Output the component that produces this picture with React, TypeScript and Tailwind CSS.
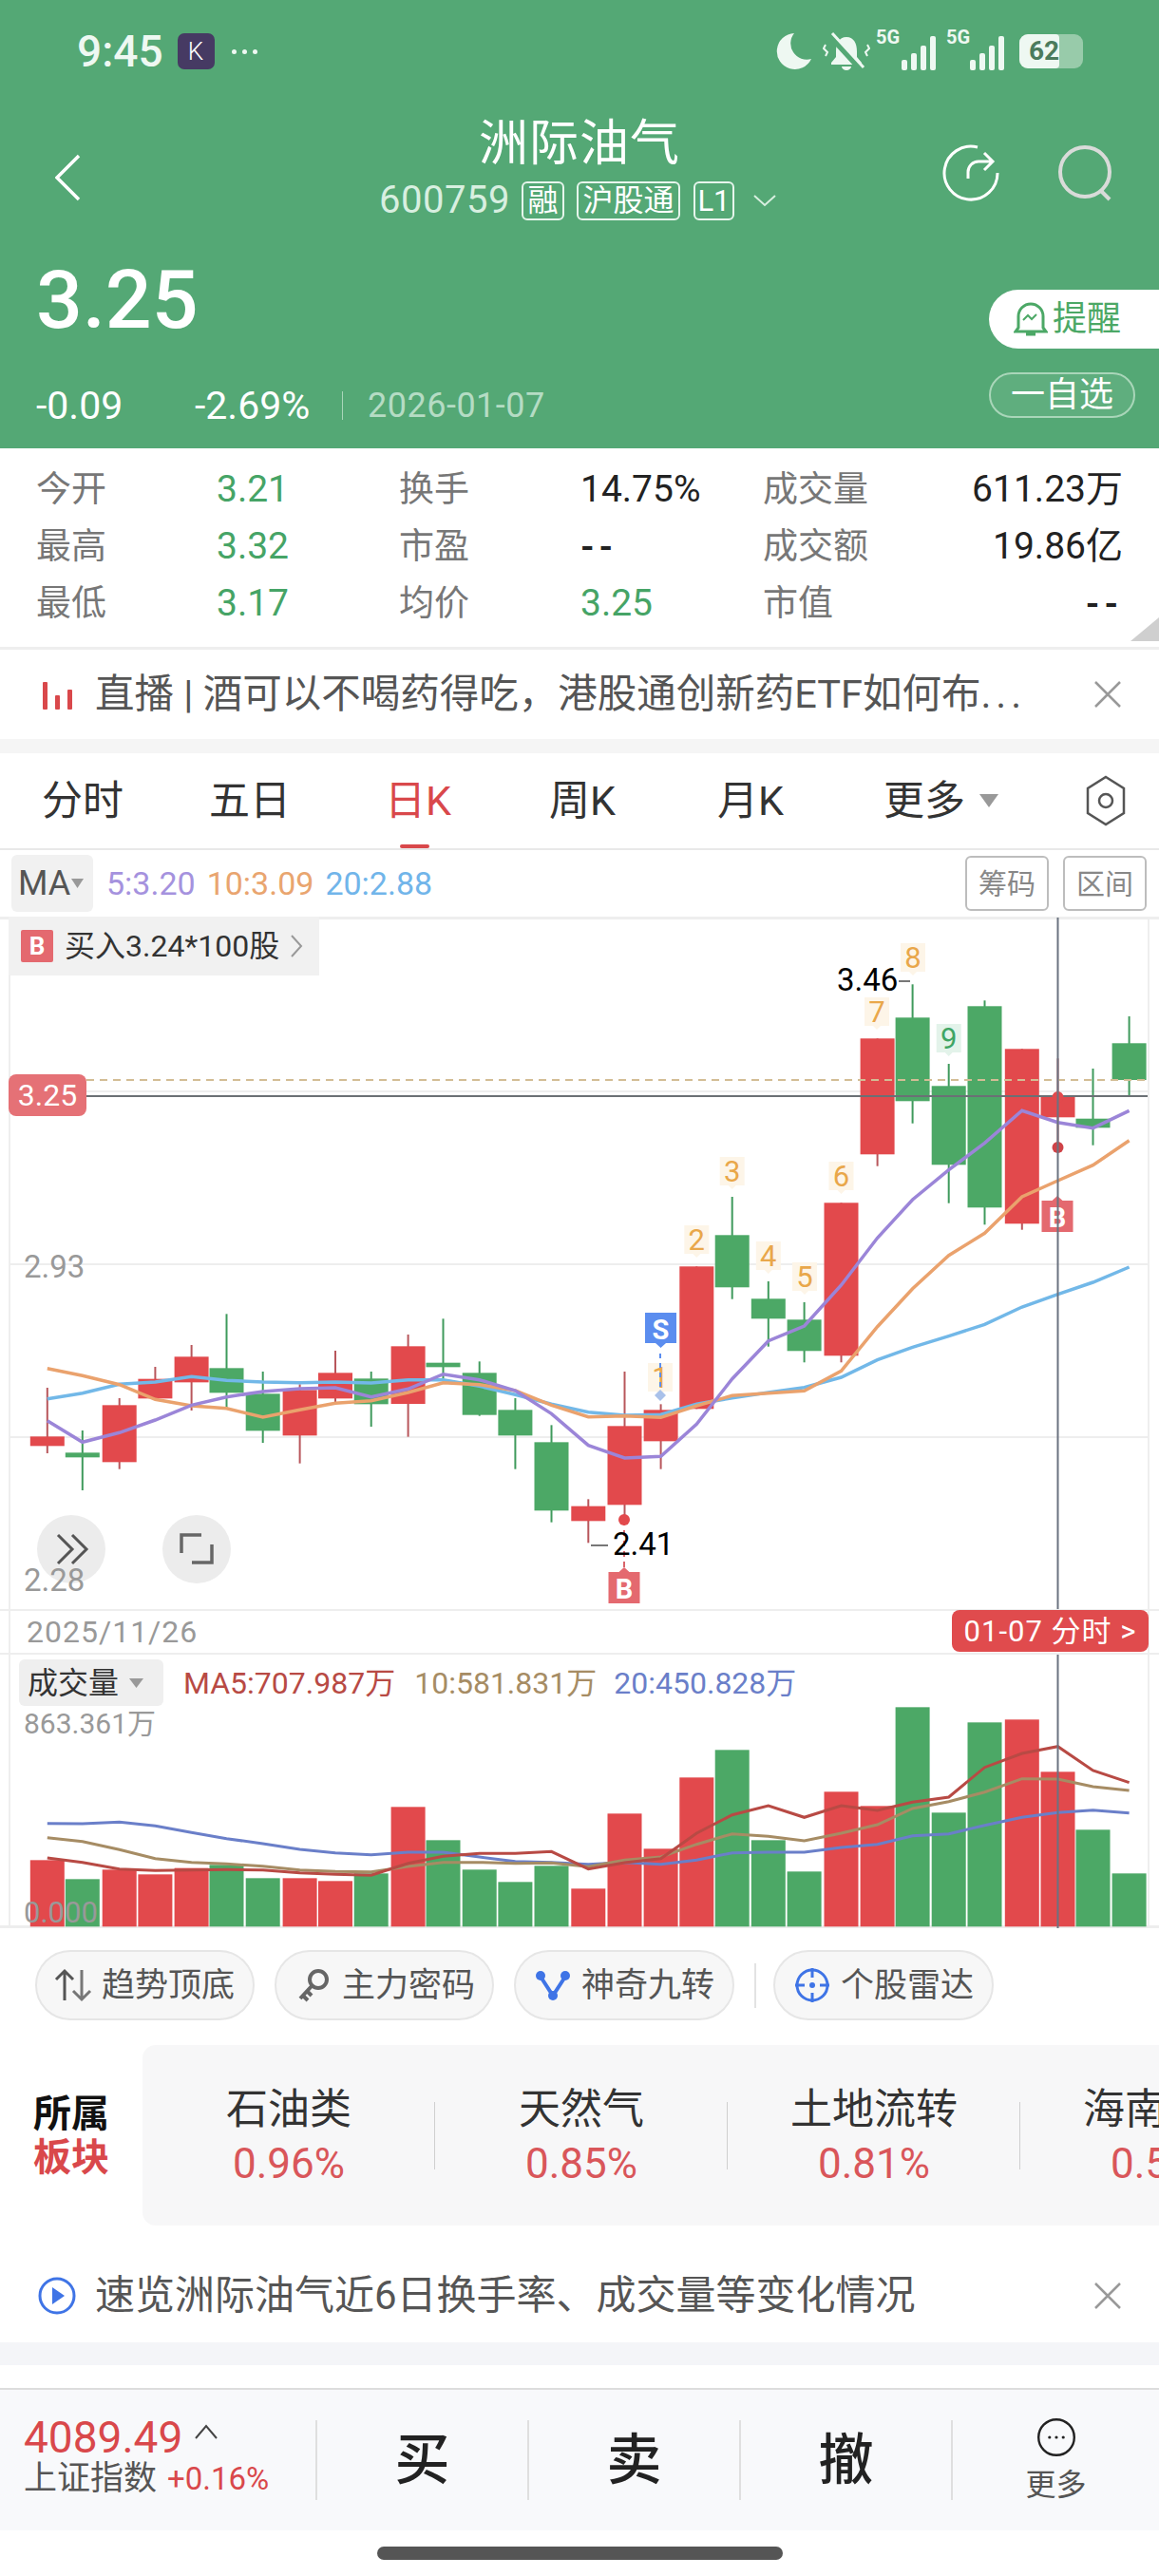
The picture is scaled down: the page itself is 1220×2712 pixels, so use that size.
import React from "react";

const RED = "#e2494c";
const GREEN = "#4ca866";
const xs = [49.8, 86.8, 125.7, 163.4, 201.6, 238.5, 276.7, 315.6, 353, 390.7, 429.6, 466.5, 504.7, 542.4, 580.5, 619.3, 657.5, 695.6, 733.3, 770.7, 808.8, 846.6, 885.5, 923.6, 960.6, 998.7, 1036.5, 1075.8, 1113.5, 1150.5, 1188.6];
const z = (v: number) => 1340 + v / 3;

type C = [number, number, number, number, "r" | "g"];
const candles: C[] = [
  [z(363), z(570), z(517), z(547), "r"],
  [z(498), z(687), z(568), z(583), "g"],
  [z(396), z(620), z(418), z(598), "r"],
  [z(297), z(400), z(335), z(397), "r"],
  [z(228), z(435), z(265), z(346), "r"],
  [z(130), z(430), z(301), z(379), "g"],
  [z(312), z(537), z(382), z(499), "g"],
  [z(352), z(602), z(370), z(514), "r"],
  [z(246), z(415), z(316), z(397), "r"],
  [z(312), z(486), z(334), z(415), "g"],
  [z(195), z(518), z(232), z(414), "r"],
  [z(145), z(335), z(284), z(298), "g"],
  [z(280), z(452), z(316), z(449), "g"],
  [z(396), z(620), z(433), z(514), "g"],
  [z(481), z(788), z(535), z(751), "g"],
  [z(715), z(853), z(737), z(784), "r"],
  [z(312), z(770), z(484), z(733), "r"],
  [z(415), z(620), z(433), z(532), "r"],
  [1333.3, 1483.3, 1333.3, 1483.3, "r"],
  [1260, 1367.7, 1300.3, 1355.3, "g"],
  [1349, 1417.7, 1367.3, 1388.3, "g"],
  [1371, 1434.3, 1389.3, 1422.3, "g"],
  [1266.3, 1434.3, 1266.3, 1427.3, "r"],
  [1093.3, 1227.7, 1093.3, 1215.3, "r"],
  [1036.3, 1182.7, 1071.3, 1159.3, "g"],
  [1120, 1266.7, 1143.3, 1226.3, "g"],
  [1053.3, 1289.3, 1059.3, 1271.3, "g"],
  [1104.3, 1294.7, 1104.3, 1288.3, "r"],
  [1114.3, 1203, 1154.3, 1176.3, "r"],
  [1125, 1205.7, 1177.7, 1187.3, "g"],
  [1070, 1153.3, 1098.3, 1137, "g"],
];

const ma5 = [467, 535, 505, 465, 418, 392, 375, 366, 363, 392, 367, 320, 338, 372, 445, 545, 585, 580, 478, 335, 215, 168].map(z).concat([1353, 1303.3, 1263, 1231.7, 1203.3, 1169.3, 1181.7, 1187.7, 1169.3]);
const ma10 = [302, 325, 353, 400, 420, 428, 456, 433, 412, 404, 378, 347, 353, 372, 418, 455, 452, 457, 420, 388, 380, 373, 310, 170].map(z).concat([1356.7, 1321.7, 1298.3, 1260, 1243, 1226.7, 1200.7]);
const ma20 = [398, 380, 352, 345, 328, 340, 345, 347, 345, 348, 338, 338, 358, 385, 415, 440, 450, 448, 415, 395, 378, 362, 330, 275, 235, 200, 163, 108, 68, 30, -18].map(z);

const volTops = [655, 715, 685, 700, 680, 670, 712, 712, 721, 697, 487, 592, 685, 724, 673, 745, 508, 619, 394, 307, 592, 691, 439, 484, 172, 505, 220, 211, 376, 559, 697];
const v5 = [648, 662, 683, 688, 686, 685, 686, 695, 700, 703, 665, 643, 634, 634, 628, 683, 663, 650, 570, 512, 483, 520, 483, 498, 472, 456, 362, 318, 296, 372, 410];
const v10 = [584, 596, 622, 650, 662, 667, 674, 686, 691, 692, 675, 662, 662, 665, 664, 676, 655, 645, 605, 572, 580, 594, 570, 543, 492, 470, 440, 398, 399, 423, 435];
const v20 = [539, 540, 535, 547, 568, 587, 603, 621, 632, 638, 630, 630, 645, 659, 662, 668, 662, 668, 655, 632, 630, 630, 615, 605, 578, 572, 545, 520, 505, 497, 506];

const pts = (ys: number[]) => ys.map((y, i) => `${xs[i]},${y.toFixed(1)}`).join(" ");
const volPts = (ys: number[]) => pts(ys.map((v) => 1740 + v / 3));

function Tag({ x, y, n, green }: { x: number; y: number; n: string; green?: boolean }) {
  return (
    <g>
      <path d={`M${x - 13} ${y}h26v30h-9l-4 4l-4 -4h-9z`} fill={green ? "#e3f3ea" : "#fdf5e8"} />
      <text x={x} y={y + 26} textAnchor="middle" fontSize="31" fill={green ? "#3fa564" : "#e9a74a"}>{n}</text>
    </g>
  );
}

function BMark({ x, y }: { x: number; y: number }) {
  return (
    <g>
      <path d={`M${x - 16.5} ${y}h11l5.5 -5l5.5 5h11v33h-33z`} fill="#e4696f" />
      <text x={x} y={y + 28} textAnchor="middle" fontSize="29" fontWeight="700" fill="#fff">B</text>
    </g>
  );
}

function MainChart() {
  return (
    <svg viewBox="0 965 1220 729" className="absolute left-0 top-[-3px] w-[1220px] h-[729px] font-['Roboto','Noto_Sans_CJK_SC',sans-serif]">
      <line x1="10" x2="1208" y1="1149" y2="1149" stroke="#eeeeee" strokeWidth="2" />
      <line x1="10" x2="1208" y1="1331" y2="1331" stroke="#eeeeee" strokeWidth="2" />
      <line x1="10" x2="1208" y1="1513" y2="1513" stroke="#eeeeee" strokeWidth="2" />
      {candles.map((c, i) => (
        <g key={i}>
          <line x1={xs[i]} x2={xs[i]} y1={c[0]} y2={c[1]} stroke={c[4] === "r" ? "#b8565b" : "#3f9a5c"} strokeWidth="2" />
          <rect x={xs[i] - 18} y={c[2]} width="36" height={c[3] - c[2]} fill={c[4] === "r" ? RED : GREEN} />
        </g>
      ))}
      <line x1="91" x2="1208" y1="1137" y2="1137" stroke="#d3bd95" strokeWidth="2" strokeDasharray="8 6" />
      <line x1="91" x2="1208" y1="1154" y2="1154" stroke="#6b7075" strokeWidth="2" />
      <polyline points={pts(ma20)} fill="none" stroke="#72b8e8" strokeWidth="3.500" />
      <polyline points={pts(ma10)} fill="none" stroke="#eaa26d" strokeWidth="3.500" />
      <polyline points={pts(ma5)} fill="none" stroke="#9b85d8" strokeWidth="3.500" />
      <Tag x={695} y={1435} n="1" />
      <Tag x={733.3} y={1290} n="2" />
      <Tag x={770.7} y={1218} n="3" />
      <Tag x={808.8} y={1307} n="4" />
      <Tag x={847} y={1329} n="5" />
      <Tag x={885.5} y={1223} n="6" />
      <Tag x={923} y={1050} n="7" />
      <Tag x={961} y={993} n="8" />
      <Tag x={998.7} y={1078} n="9" green />
      <line x1="695" x2="695" y1="1425" y2="1470" stroke="#5b8def" strokeWidth="2" strokeDasharray="5 5" />
      <path d="M679 1382h33v32h-11l-5.500 5l-5.500 -5h-11z" fill="#5b8def" />
      <text x="695.500" y="1410" textAnchor="middle" fontSize="29" fontWeight="700" fill="#fff">S</text>
      <path d="M695 1463l6 6l-6 6l-6 -6z" fill="#a9c1ea" />
      <line x1="657" x2="657" y1="1600" y2="1654" stroke="#d9646a" strokeWidth="2" strokeDasharray="6 5" />
      <circle cx="657" cy="1600" r="6" fill={RED} />
      <BMark x={657} y={1655} />
      <line x1="622" x2="640" y1="1627" y2="1627" stroke="#777" strokeWidth="2" />
      <text x="645" y="1637" fontSize="33" fill="#000">2.41</text>
      <text x="881" y="1043" fontSize="33" fill="#000">3.46</text>
      <line x1="946" x2="958" y1="1033" y2="1033" stroke="#777" strokeWidth="2" />
      <circle cx="1113.500" cy="1155" r="6" fill={RED} />
      <circle cx="1113.500" cy="1208" r="6" fill="#cf4348" />
      <BMark x={1113} y={1264} />
      <line x1="1113.500" x2="1113.500" y1="966" y2="1694" stroke="#6b7280" strokeWidth="2" />
      <text x="25" y="1345" fontSize="33" fill="#999">2.93</text>
      <circle cx="75" cy="1631" r="36" fill="#ececec" />
      <path d="M61 1616l15 15l-15 15M76 1616l15 15l-15 15" fill="none" stroke="#555" strokeWidth="3" />
      <circle cx="207" cy="1631" r="36" fill="#ececec" />
      <path d="M212 1616h-21v19M202 1645h21v-19" fill="none" stroke="#666" strokeWidth="3.500" />
      <text x="25" y="1675" fontSize="33" fill="#999">2.28</text>
    </svg>
  );
}

function VolChart() {
  const b = 2028.3;
  return (
    <svg viewBox="0 1742 1220 288" className="absolute inset-0 w-[1220px] h-[288px] font-['Roboto','Noto_Sans_CJK_SC',sans-serif]">
      {volTops.map((t, i) => {
        const y = 1740 + t / 3;
        return <rect key={i} x={xs[i] - 18} y={y} width="36" height={b - y} fill={candles[i][4] === "r" ? RED : GREEN} />;
      })}
      <polyline points={volPts(v20)} fill="none" stroke="#6a7fc9" strokeWidth="3" />
      <polyline points={volPts(v10)} fill="none" stroke="#a68c64" strokeWidth="3" />
      <polyline points={volPts(v5)} fill="none" stroke="#b84a44" strokeWidth="3" />
      <line x1="1113.500" x2="1113.500" y1="1742" y2="2030" stroke="#6b7280" strokeWidth="2" />
      <text x="25" y="1825" fontSize="30" fill="#999">863.361万</text>
      <text x="25" y="2024" fontSize="31" fill="#999">0.000</text>
    </svg>
  );
}

function StatusIcons() {
  return (
    <div className="flex items-center">
      <svg width="38" height="40" viewBox="0 0 38 40" className="mr-[11px]">
        <path d="M19 1a19 19 0 1 0 18 27a17 17 0 0 1 -18 -27z" fill="#eef8f2" />
      </svg>
      <svg width="50" height="42" viewBox="0 0 50 42" className="mr-[6px]" fill="none">
        <path d="M25 6c8 0 11 7 11 15v6l5 6v2H9v-2l5-6v-6c0-8 3-15 11-15zM20 37h10a5 4 0 0 1 -10 0z" fill="#eef8f2" />
        <path d="M7 4l33 36" stroke="#54a875" strokeWidth="6" />
        <path d="M10 2l33 36" stroke="#eef8f2" strokeWidth="3" />
        <path d="M3 14l-2 4l4 4l-2 4M47 14l2 4l-4 4l2 4" stroke="#eef8f2" strokeWidth="2" />
      </svg>
      {[0, 1].map((k) => (
        <div key={k} className={`relative h-[40px] ${k === 0 ? "w-[63px]" : "w-[61px] ml-[11px]"}`}>
          <span className="absolute left-0 top-[-5px] text-[20px] leading-[20px] font-bold text-[#eef8f2]">5G</span>
          <div className="absolute right-0 bottom-0 flex items-end gap-[4px]">
            <i className="block w-[6px] h-[11px] rounded-[2px] bg-[#eef8f2]" />
            <i className="block w-[6px] h-[18px] rounded-[2px] bg-[#eef8f2]" />
            <i className="block w-[6px] h-[26px] rounded-[2px] bg-[#eef8f2]" />
            <i className="block w-[6px] h-[36px] rounded-[2px] bg-[#eef8f2]" />
          </div>
        </div>
      ))}
      <div className="ml-[16px] w-[67px] h-[36px] rounded-[9px] bg-[#98cbaa] overflow-hidden flex">
        <div className="w-[42px] h-full bg-[#eef8f2] rounded-r-[4px]" />
        <span className="ml-[-32px] text-[28px] leading-[36px] font-bold text-[#4b7b5d]">62</span>
      </div>
    </div>
  );
}

function Header() {
  return (
    <div className="h-[472px] bg-[#54a875] text-white flex flex-col">
      <div className="h-[108px] pl-[81px] pr-[80px] flex items-center justify-between">
        <div className="flex items-center">
          <span className="text-[46px] leading-none font-medium text-[#eef8f2]">9:45</span>
          <div className="ml-[15px] w-[39px] h-[38px] rounded-[7px] bg-[#463a63] flex items-center justify-center text-[26px] text-white font-light">K</div>
          <span className="ml-[18px] flex gap-[6px]">
            <i className="block w-[5px] h-[5px] rounded-full bg-[#eef8f2]" />
            <i className="block w-[5px] h-[5px] rounded-full bg-[#eef8f2]" />
            <i className="block w-[5px] h-[5px] rounded-full bg-[#eef8f2]" />
          </span>
        </div>
        <StatusIcons />
      </div>
      <div className="h-[142px] grid grid-cols-[380px_1fr_380px]">
        <div className="pl-[58px] pt-[54px]">
          <svg width="28" height="50" viewBox="0 0 28 50" fill="none">
            <path d="M25 2L2 25l23 23" stroke="#fff" strokeWidth="3.500" />
          </svg>
        </div>
        <div className="flex flex-col items-center pt-[18px]">
          <div className="text-[52px] leading-[52px] tracking-[1px] text-white">洲际油气</div>
          <div className="mt-[12px] ml-[-4px] flex items-center h-[42px]">
            <span className="text-[40px] leading-none tracking-[0.5px] text-[#d8efe0]">600759</span>
            <span className="ml-[12px] h-[41px] w-[45px] rounded-[6px] border-2 border-[#e6f5ec] flex items-center justify-center text-[32px] leading-none">融</span>
            <span className="ml-[13px] h-[41px] w-[109px] rounded-[6px] border-2 border-[#e6f5ec] flex items-center justify-center text-[32px] leading-none">沪股通</span>
            <span className="ml-[14px] h-[41px] w-[43px] rounded-[6px] border-2 border-[#e6f5ec] flex items-center justify-center text-[31px] leading-none">L1</span>
            <svg width="24" height="14" viewBox="0 0 24 14" className="ml-[20px]" fill="none">
              <path d="M1 2l11 10L23 2" stroke="#d8efe0" strokeWidth="2" />
            </svg>
          </div>
        </div>
        <div className="flex justify-end pr-[46px] pt-[42px]">
          <svg width="64" height="64" viewBox="0 0 64 64" fill="none">
            <path d="M40 5a28 28 0 1 0 21 27" stroke="#fff" strokeWidth="3" />
            <path d="M30 38v-7a11 11 0 0 1 11-11h14M47 11l9 9l-9 9" stroke="#fff" strokeWidth="3" />
          </svg>
          <svg width="62" height="64" viewBox="0 0 62 64" className="ml-[59px]" fill="none">
            <circle cx="30" cy="31" r="26" stroke="#d9dbd9" strokeWidth="4" />
            <path d="M47 51l9 9" stroke="#d9dbd9" strokeWidth="4" />
          </svg>
        </div>
      </div>
      <div className="flex-1 flex justify-between">
        <div className="pl-[38px] pt-[20px]">
          <div className="text-[86px] leading-[92px] font-medium text-white">3.25</div>
          <div className="mt-[45px] flex items-center h-[40px]">
            <span className="text-[41px] leading-none w-[167px]">-0.09</span>
            <span className="text-[41px] leading-none w-[155px]">-2.69%</span>
            <i className="block w-[1px] h-[30px] bg-[#a9d6b9]" />
            <span className="ml-[26px] text-[36px] leading-none tracking-[0.5px] text-[#b5dcc4]">2026-01-07</span>
          </div>
        </div>
        <div className="w-[179px] pt-[55px]">
          <div className="h-[62px] rounded-l-[31px] bg-white flex items-center pl-[26px] text-[#4ca866]">
            <svg width="36" height="40" viewBox="0 0 36 40" fill="none">
              <path d="M5 29V17a13 13 0 0 1 26 0v12l3 4H2zM13 36h10" stroke="#4ca866" strokeWidth="3" />
              <path d="M10 21l5-5l4 4l5-5" stroke="#4ca866" strokeWidth="2" />
            </svg>
            <span className="ml-[5px] text-[36px] leading-none">提醒</span>
          </div>
          <div className="mt-[25px] w-[154px] h-[48px] rounded-[24px] border-2 border-[#a9d6b9] bg-[#5fae7e] flex items-center justify-center">
            <span className="text-[36px] leading-none text-white">一自选</span>
          </div>
        </div>
      </div>
    </div>
  );
}

const stats = [
  ["今开", "3.21", "g", "换手", "14.75%", "k", "成交量", "611.23万"],
  ["最高", "3.32", "g", "市盈", "--", "k", "成交额", "19.86亿"],
  ["最低", "3.17", "g", "均价", "3.25", "g", "市值", "--"],
];

function Stats() {
  return (
    <div className="relative h-[209px] bg-white pt-[13px] px-[38px]">
      {stats.map((r) => (
        <div key={r[0]} className="grid grid-cols-[190px_192px_191px_192px_120px_1fr] h-[60px] items-center text-[37px] leading-none">
          <span className="text-[#777]">{r[0]}</span>
          <span className="text-[#46a466] text-[39px]">{r[1]}</span>
          <span className="text-[#777]">{r[3]}</span>
          <span className={r[5] === "g" ? "text-[#46a466] text-[39px]" : r[4] === "--" ? "text-[#222] font-bold tracking-[5px]" : "text-[#222] text-[39px]"}>{r[4]}</span>
          <span className="text-[#777]">{r[6]}</span>
          <span className={r[7] === "--" ? "text-right text-[#222] font-bold tracking-[5px]" : "text-right text-[#222] text-[39px]"}>{r[7]}</span>
        </div>
      ))}
      <div className="absolute right-0 bottom-[6px] w-[30px] h-[25px] bg-[#cfcfcf] [clip-path:polygon(100%_0,100%_100%,0_100%)]" />
    </div>
  );
}

function CloseX() {
  return (
    <svg width="28" height="28" viewBox="0 0 28 28" fill="none">
      <path d="M1 1l26 26M27 1L1 27" stroke="#999" strokeWidth="2.500" />
    </svg>
  );
}

function Notice1() {
  return (
    <div className="h-[97px] border-t-[3px] border-[#eeeeee] bg-white flex items-center pl-[45px] pr-[40px]">
      <svg width="32" height="32" viewBox="0 0 32 32" className="shrink-0">
        <rect x="0" y="3" width="5" height="29" fill="#d9484b" rx="1" />
        <rect x="13" y="17" width="5" height="15" fill="#d9484b" rx="1" />
        <rect x="26" y="11" width="5" height="21" fill="#d9484b" rx="1" />
      </svg>
      <div className="ml-[23px] flex-1 text-[41.500px] leading-[1.2] text-[#555] whitespace-nowrap">直播 | 酒可以不喝药得吃，港股通创新药ETF如何布<span className="tracking-[5px]">...</span></div>
      <CloseX />
    </div>
  );
}

function Tabs() {
  const tabs: [string, string][] = [
    ["分时", "w-[176px]"],
    ["五日", "w-[185px]"],
    ["日K", "w-[173px]"],
    ["周K", "w-[177px]"],
    ["月K", "w-[175px]"],
  ];
  return (
    <div className="h-[102px] bg-white border-b-[2px] border-[#e8e8e8] flex items-center pl-[44px] text-[43px] leading-none text-[#333]">
      {tabs.map(([t, w]) => (
        <div key={t} className={`${w} relative h-full flex items-center ${t === "日K" ? "text-[#d9484b]" : ""}`}>
          {t}
          {t === "日K" && <i className="absolute left-[16px] bottom-0 block w-[31px] h-[4px] rounded-[2px] bg-[#d9484b]" />}
        </div>
      ))}
      <div className="flex items-center w-[213px]">
        更多
        <svg width="20" height="14" viewBox="0 0 20 14" className="ml-[15px]"><path d="M0 0h20l-10 14z" fill="#999" /></svg>
      </div>
      <svg width="42" height="54" viewBox="0 0 42 54" fill="none">
        <path d="M21 2l19 12v26L21 52L2 40V14z" stroke="#555" strokeWidth="2.500" />
        <circle cx="21" cy="27" r="7" stroke="#555" strokeWidth="2.500" />
      </svg>
    </div>
  );
}

function MaRow() {
  return (
    <div className="h-[70px] bg-white flex items-center pl-[12px] pr-[13px]">
      <div className="w-[86px] h-[60px] rounded-[6px] bg-[#f1f1f1] flex items-center pl-[7px] text-[36px] leading-none text-[#555]">
        MA
        <svg width="13" height="10" viewBox="0 0 13 10" className="ml-[1px]"><path d="M0 0h13l-6.500 10z" fill="#999" /></svg>
      </div>
      <div className="ml-[14px] flex-1 flex gap-[12px] text-[34px] leading-none">
        <span className="text-[#a592de]">5:3.20</span>
        <span className="text-[#e9a56f]">10:3.09</span>
        <span className="text-[#71b5ea]">20:2.88</span>
      </div>
      <div className="w-[88px] h-[58px] rounded-[6px] border-2 border-[#bdbdbd] flex items-center justify-center text-[30px] text-[#888]">筹码</div>
      <div className="ml-[15px] w-[88px] h-[58px] rounded-[6px] border-2 border-[#bdbdbd] flex items-center justify-center text-[30px] text-[#888]">区间</div>
    </div>
  );
}

function ChartBlock() {
  return (
    <div className="bg-white ml-[9px] mr-[10px] border-l-2 border-r-2 border-[#eeeeee]">
      <div className="relative h-[729px] ml-[-11px] mr-[-12px] border-t-[3px] border-[#eeeeee]">
        <MainChart />
        <div className="absolute left-[9px] top-[-3px] w-[327px] h-[62px] bg-[#f1f1f1] flex items-center pl-[13px] text-[32px] leading-none text-[#333]">
          <span className="w-[34px] h-[34px] rounded-[2px] bg-[#e4696f] text-white font-bold text-[26px] flex items-center justify-center">B</span>
          <span className="ml-[12px]">买入3.24*100股</span>
          <svg width="14" height="28" viewBox="0 0 14 28" className="ml-[11px]" fill="none"><path d="M2 3l10 11L2 25" stroke="#999" strokeWidth="2" /></svg>
        </div>
        <div className="absolute left-[9px] top-[163px] w-[82px] h-[44px] rounded-[8px] bg-[#e4696f]/95 flex items-center justify-center text-white text-[32px] leading-none">3.25</div>
      </div>
      <div className="relative h-[48px] ml-[-11px] mr-[-12px] border-y-2 border-[#eeeeee] flex items-center pl-[28px]">
        <span className="text-[32px] leading-none tracking-[1px] text-[#999]">2025/11/26</span>
        <div className="absolute left-[1002px] top-[-1px] w-[207px] h-[44px] rounded-[8px] bg-[#e04b4d] text-white text-[31px] leading-none tracking-[1px] flex items-center justify-center">01-07 分时 &gt;</div>
      </div>
      <div className="relative h-[288px] ml-[-11px] mr-[-12px] border-b-[3px] border-[#eeeeee]">
        <VolChart />
        <div className="absolute left-[20px] top-[5px] flex items-center text-[32px] leading-none">
          <div className="w-[152px] h-[49px] rounded-[6px] bg-[#efefef] flex items-center pl-[9px] text-[#333]">
            成交量
            <svg width="15" height="10" viewBox="0 0 15 10" className="ml-[11px]"><path d="M0 0h15l-7.500 10z" fill="#999" /></svg>
          </div>
          <span className="ml-[21px] text-[#b84a44]">MA5:707.987万</span>
          <span className="ml-[20px] text-[#a68c64]">10:581.831万</span>
          <span className="ml-[18px] text-[#6a7fc9]">20:450.828万</span>
        </div>
      </div>
    </div>
  );
}

function Chips() {
  const chip = "h-[74px] rounded-[37px] border-2 border-[#e6e6e6] bg-[#f7f7f7] flex items-center text-[35px] leading-none text-[#555]";
  return (
    <div className="h-[123px] bg-white flex items-center pl-[37px] pb-[3px]">
      <div className={`${chip} w-[231px] pl-[18px]`}>
        <svg width="40" height="36" viewBox="0 0 40 36" fill="none">
          <path d="M11 34V3M2 12l9-9l9 9" stroke="#555" strokeWidth="3" />
          <path d="M29 2v31M20 24l9 9l9-9" stroke="#777" strokeWidth="3" />
        </svg>
        <span className="ml-[10px]">趋势顶底</span>
      </div>
      <div className={`${chip} ml-[21px] w-[231px] pl-[22px]`}>
        <svg width="36" height="38" viewBox="0 0 36 38" fill="none">
          <circle cx="22" cy="13" r="9" stroke="#666" strokeWidth="4" />
          <path d="M15 20L3 33M6 30l5 5M10 25l5 5" stroke="#666" strokeWidth="4" />
        </svg>
        <span className="ml-[11px]">主力密码</span>
      </div>
      <div className={`${chip} ml-[21px] w-[232px] pl-[20px]`}>
        <svg width="38" height="38" viewBox="0 0 38 38" fill="none">
          <path d="M6 10l13 20L32 10" stroke="#3f74e6" strokeWidth="4" />
          <circle cx="6" cy="9" r="5" fill="#3f74e6" />
          <circle cx="32" cy="9" r="5" fill="#3f74e6" />
          <circle cx="19" cy="30" r="5" fill="#3f74e6" />
        </svg>
        <span className="ml-[11px]">神奇九转</span>
      </div>
      <i className="block ml-[21px] w-[2px] h-[47px] bg-[#e3e3e3]" />
      <div className={`${chip} ml-[18px] w-[232px] pl-[20px]`}>
        <svg width="38" height="38" viewBox="0 0 38 38" fill="none">
          <circle cx="19" cy="19" r="16" stroke="#3f74e6" strokeWidth="3" />
          <path d="M19 1v10M19 27v10M1 19h10M27 19h10" stroke="#3f74e6" strokeWidth="3" />
          <circle cx="19" cy="19" r="3" fill="#3f74e6" />
        </svg>
        <span className="ml-[11px]">个股雷达</span>
      </div>
    </div>
  );
}

function Sectors() {
  const items = [
    ["石油类", "0.96%"],
    ["天然气", "0.85%"],
    ["土地流转", "0.81%"],
    ["海南自贸", "0.52%"],
  ];
  return (
    <div className="h-[190px] bg-white flex overflow-hidden">
      <div className="w-[150px] shrink-0 pl-[35px] pt-[50px] text-[40px] leading-[46px] font-bold">
        <div className="text-[#111]">所属</div>
        <div className="text-[#d9484b]">板块</div>
      </div>
      <div className="flex-1 rounded-l-[14px] bg-[#f7f7f8] flex items-start overflow-hidden pt-[43px]">
        {items.map(([n, p], i) => (
          <div key={n} className="relative w-[308px] shrink-0 flex flex-col items-center">
            <div className="text-[44px] leading-[50px] text-[#333] whitespace-nowrap">{n}</div>
            <div className="mt-[10px] text-[44px] leading-[44px] text-[#d9565a]">{p}</div>
            {i < 3 && <i className="absolute right-0 top-[17px] block w-[1px] h-[71px] bg-[#cfcfcf]" />}
          </div>
        ))}
      </div>
    </div>
  );
}

function Notice2() {
  return (
    <div className="h-[123px] bg-white flex items-center pl-[40px] pr-[40px] pt-[25px]">
      <svg width="40" height="40" viewBox="0 0 40 40" fill="none" className="shrink-0">
        <circle cx="20" cy="20" r="18" stroke="#3f74e6" strokeWidth="3" />
        <path d="M15 11l13 9l-13 9z" fill="#3f74e6" />
      </svg>
      <div className="ml-[20px] flex-1 text-[42px] leading-none text-[#555] whitespace-nowrap">速览洲际油气近6日换手率、成交量等变化情况</div>
      <CloseX />
    </div>
  );
}

function BottomBar() {
  return (
    <>
      <div className="h-[24px] bg-[#f4f5f8]" />
      <div className="h-[24px] bg-white" />
      <div className="h-[150px] border-t-2 border-[#dddddd] bg-[#f8f9fb] flex items-center">
        <div className="w-[332px] pl-[25px] shrink-0 self-start pt-[28px]">
          <div className="flex items-center h-[44px]">
            <span className="text-[46px] leading-none text-[#d9484b]">4089.49</span>
            <svg width="24" height="16" viewBox="0 0 24 16" className="ml-[13px] mb-[12px]" fill="none"><path d="M1 15L12 2l11 13" stroke="#444" strokeWidth="2" /></svg>
          </div>
          <div className="mt-[4px] flex items-center">
            <span className="text-[35px] leading-none text-[#555]">上证指数</span>
            <span className="ml-[11px] text-[33px] leading-none text-[#d9484b]">+0.16%</span>
          </div>
        </div>
        {["买", "卖", "撤"].map((t) => (
          <div key={t} className="w-[223px] h-[84px] border-l-2 border-[#dfdfdf] flex items-center justify-center text-[58px] leading-none font-medium text-[#222]">{t}</div>
        ))}
        <div className="flex-1 h-[84px] border-l-2 border-[#dfdfdf] flex flex-col items-center">
          <svg width="50" height="50" viewBox="0 0 50 50" fill="none" className="mt-[-2px]">
            <circle cx="25" cy="25" r="23.500" stroke="#222" strokeWidth="3" />
            <circle cx="16" cy="25" r="2" fill="#222" />
            <circle cx="25" cy="25" r="2" fill="#222" />
            <circle cx="34" cy="25" r="2" fill="#222" />
          </svg>
          <span className="mt-[14px] text-[32px] leading-none text-[#555]">更多</span>
        </div>
      </div>
      <div className="h-[48px] bg-white flex justify-center pt-[17px]">
        <i className="block w-[427px] h-[14px] rounded-[7px] bg-[#555]" />
      </div>
    </>
  );
}

export default function App() {
  return (
    <div className="w-[1220px] h-[2712px] bg-white overflow-hidden font-['Roboto','Noto_Sans_CJK_SC',sans-serif]">
      <Header />
      <Stats />
      <Notice1 />
      <div className="h-[15px] bg-[#f5f5f5]" />
      <Tabs />
      <MaRow />
      <ChartBlock />
      <Chips />
      <Sectors />
      <Notice2 />
      <BottomBar />
    </div>
  );
}
